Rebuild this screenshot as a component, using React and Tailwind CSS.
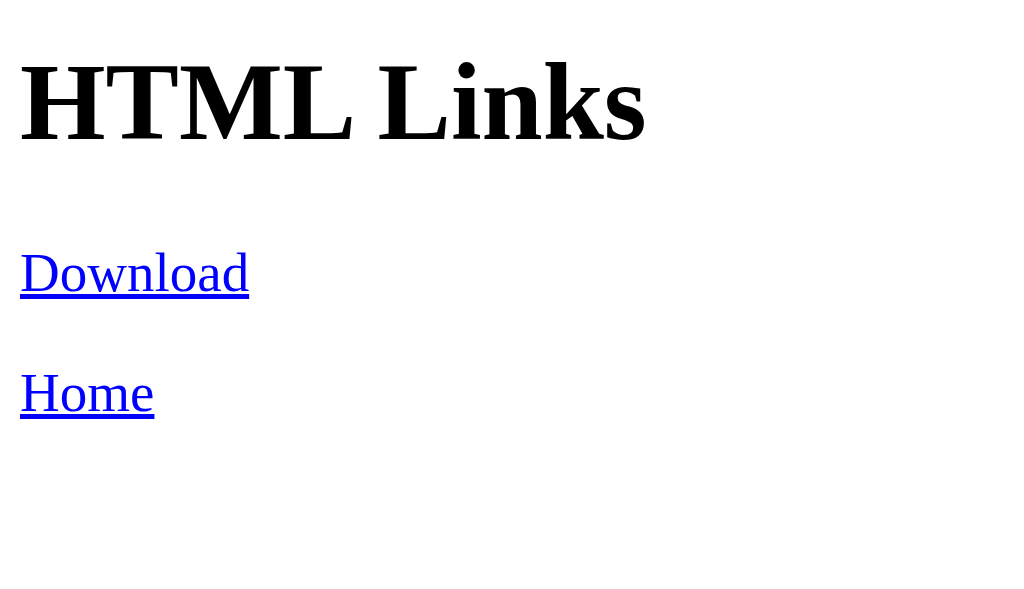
export default function App() {
  return (
    <div className="min-h-[589px] bg-white pl-[20px] text-black" style={{ fontFamily: '"Liberation Serif", "Times New Roman", serif' }}>
      <h1 className="m-0 pt-[47px] text-[110px] font-bold leading-[110px]">HTML Links</h1>
      <p className="m-0 mt-[86px] text-[55px] leading-[60px]">
        <a href="#" className="text-[#0000ff] underline decoration-[5px] underline-offset-[3px]">Download</a>
      </p>
      <p className="m-0 mt-[60px] text-[55px] leading-[60px]">
        <a href="#" className="text-[#0000ff] underline decoration-[5px] underline-offset-[3px]">Home</a>
      </p>
    </div>
  );
}
